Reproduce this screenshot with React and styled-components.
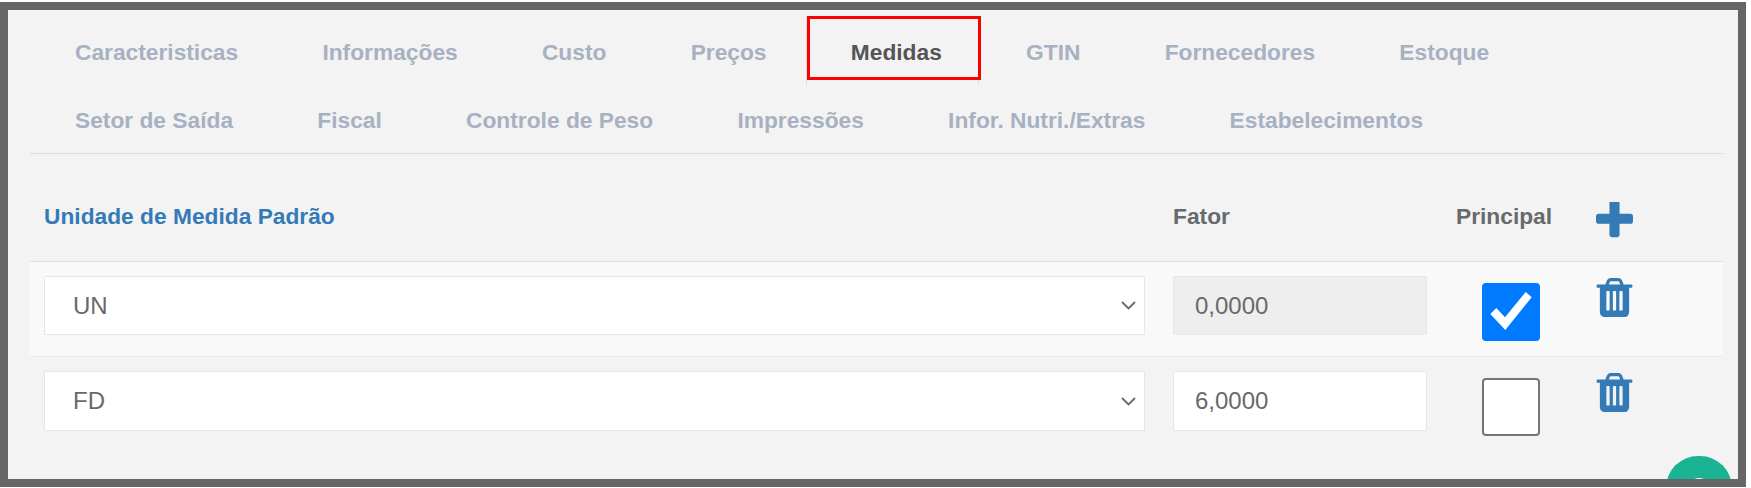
import React from "react";
import styled, { createGlobalStyle } from "styled-components";

const tabRows = [
  ["Caracteristicas", "Informações", "Custo", "Preços", "Medidas", "GTIN", "Fornecedores", "Estoque"],
  ["Setor de Saída", "Fiscal", "Controle de Peso", "Impressões", "Infor. Nutri./Extras", "Estabelecimentos"],
];

const rows = [
  { unit: "UN", factor: "0,0000", main: true },
  { unit: "FD", factor: "6,0000", main: false },
];

const GlobalStyle = createGlobalStyle`
  html, body {
    margin: 0;
    padding: 0;
    background: #fff;
  }
  body {
    font-family: "Liberation Sans", Arial, sans-serif;
  }
`;

const TrashIcon = () => (
  <TrashSvg viewBox="128 128 1536 1536">
    <path d="M704 1376v-704q0-14-9-23t-23-9h-64q-14 0-23 9t-9 23v704q0 14 9 23t23 9h64q14 0 23-9t9-23zm256 0v-704q0-14-9-23t-23-9h-64q-14 0-23 9t-9 23v704q0 14 9 23t23 9h64q14 0 23-9t9-23zm256 0v-704q0-14-9-23t-23-9h-64q-14 0-23 9t-9 23v704q0 14 9 23t23 9h64q14 0 23-9t9-23zm-544-992h448l-48-117q-7-9-17-11h-317q-10 2-17 11zm928 32v64q0 14-9 23t-23 9h-96v948q0 83-47 143.5t-113 60.5h-832q-66 0-113-58.5t-47-141.5v-952h-96q-14 0-23-9t-9-23v-64q0-14 9-23t23-9h309l70-167q15-37 54-63t79-26h320q40 0 79 26t54 63l70 167h309q14 0 23 9t9 23z" />
  </TrashSvg>
);

const PlusIcon = () => (
  <PlusSvg viewBox="192 192 1408 1408">
    <path d="M1600 736v192q0 40-28 68t-68 28h-416v416q0 40-28 68t-68 28h-192q-40 0-68-28t-28-68v-416h-416q-40 0-68-28t-28-68v-192q0-40 28-68t68-28h416v-416q0-40 28-68t68-28h192q40 0 68 28t28 68v416h416q40 0 68 28t28 68z" />
  </PlusSvg>
);

const Chevron = () => (
  <ChevronSvg viewBox="0 0 15 9">
    <path d="M1 1l6.5 6.5L14 1" />
  </ChevronSvg>
);

export default function App() {
  return (
    <>
      <GlobalStyle />
      <Panel>
        <Tabs>
          {tabRows.map((row, index) => (
            <TabRow key={index}>
              {row.map((tab) => (
                <Tab key={tab} $active={tab === "Medidas"}>
                  {tab}
                </Tab>
              ))}
            </TabRow>
          ))}
        </Tabs>

        <HeaderRow>
          <HeadTitle>Unidade de Medida Padrão</HeadTitle>
          <HeadLabel>Fator</HeadLabel>
          <HeadLabel>Principal</HeadLabel>
          <PlusIcon />
        </HeaderRow>

        {rows.map((row) => (
          <Row key={row.unit} $striped={row.main}>
            <Select $tall={!row.main}>
              {row.unit}
              <Chevron />
            </Select>
            <Factor $disabled={row.main} $tall={!row.main}>
              {row.factor}
            </Factor>
            <CheckBox $checked={row.main}>
              {row.main && (
                <svg viewBox="0 0 58 58" width="58" height="58">
                  <polygon fill="#fff" points="8.3,31 14.3,25 23,34.3 43.7,9 49.7,14.3 23.3,47" />
                </svg>
              )}
            </CheckBox>
            <TrashIcon />
          </Row>
        ))}

        <HelpButton>
          <svg viewBox="0 0 24 10" width="24" height="10">
            <circle cx="12" cy="12" r="12" fill="#fff" />
            <rect x="17.5" y="0" width="2" height="10" fill="#1ab394" />
          </svg>
        </HelpButton>
      </Panel>
    </>
  );
}

const Panel = styled.div`
  position: relative;
  box-sizing: border-box;
  width: 1746px;
  height: 485px;
  margin-top: 2px;
  padding: 15px 23px 0 30px;
  background: #f3f3f3;

  &::after {
    content: "";
    position: absolute;
    inset: 0;
    z-index: 2;
    border: 8px solid #666;
    pointer-events: none;
  }
`;

const Tabs = styled.div`
  border-bottom: 1px solid #ddd;
`;

const TabRow = styled.div`
  display: flex;
  gap: 2.25px;
`;

const Tab = styled.div`
  box-sizing: border-box;
  height: 68px;
  padding: 0 36px 0 44px;
  border: 1px solid transparent;
  border-top: 0;
  border-bottom: 0;
  font-size: 22.75px;
  font-weight: 700;
  line-height: 71px;
  color: ${({ $active }) => ($active ? "#555" : "#a7b1c2")};
  ${({ $active }) =>
    $active &&
    `
    position: relative;
    border-color: #ddd;
    &::after {
      content: "";
      position: absolute;
      left: 0;
      right: -3px;
      top: -1px;
      height: 64px;
      box-sizing: border-box;
      border: 3px solid #f00;
    }
  `}
`;

const HeaderRow = styled.div`
  display: grid;
  grid-template-columns: 1129px 283px 140px 1fr;
  align-items: start;
  height: 107px;
  padding-left: 14px;
`;

const HeadTitle = styled.div`
  margin-top: 49px;
  font-size: 22.75px;
  font-weight: 700;
  line-height: 26px;
  color: #337ab7;
`;

const HeadLabel = styled(HeadTitle)`
  color: #676a6c;
`;

const Row = styled.div`
  display: grid;
  grid-template-columns: 1129px 309px 114px 1fr;
  align-items: start;
  box-sizing: border-box;
  padding: ${({ $striped }) => ($striped ? "14px 0 15px 14px" : "14px 0 0 14px")};
  background: ${({ $striped }) => ($striped ? "#f9f9f9" : "transparent")};
  border-top: ${({ $striped }) => ($striped ? "1px solid #ddd" : "0")};
  border-bottom: ${({ $striped }) => ($striped ? "1px solid #e7eaec" : "0")};
`;

const Select = styled.div`
  display: flex;
  align-items: center;
  justify-content: space-between;
  box-sizing: border-box;
  width: 1101px;
  height: ${({ $tall }) => ($tall ? "60px" : "59px")};
  padding: 0 8px 0 28px;
  background: #fff;
  border: 1px solid #e5e6e7;
  border-radius: 1px;
  font-size: 24px;
  color: #676a6c;
`;

const ChevronSvg = styled.svg`
  width: 15px;
  height: 9px;
  fill: none;
  stroke: #676a6c;
  stroke-width: 1.8;
`;

const Factor = styled.div`
  display: flex;
  align-items: center;
  box-sizing: border-box;
  width: 254px;
  height: ${({ $tall }) => ($tall ? "60px" : "59px")};
  padding-left: 21px;
  background: ${({ $disabled }) => ($disabled ? "#eee" : "#fff")};
  border: 1px solid #e5e6e7;
  border-radius: 1px;
  font-size: 24px;
  color: #676a6c;
`;

const CheckBox = styled.div`
  box-sizing: border-box;
  width: 58px;
  height: 58px;
  margin-top: 7px;
  background: ${({ $checked }) => ($checked ? "#007bff" : "#fff")};
  border: ${({ $checked }) => ($checked ? "0" : "2px solid #767676")};
  border-radius: 4px;

  svg {
    display: block;
  }
`;

const TrashSvg = styled.svg`
  display: block;
  width: 39px;
  height: 39px;
  margin: 2px 0 0 -1px;
  fill: #337ab7;
`;

const PlusSvg = styled.svg`
  display: block;
  width: 37px;
  height: 37px;
  margin-top: 48px;
  fill: #337ab7;
`;

const HelpButton = styled.div`
  position: absolute;
  left: 1666px;
  top: 454px;
  z-index: 1;
  box-sizing: border-box;
  width: 66px;
  height: 32px;
  padding: 22px 0 0 21px;
  border-radius: 33px 33px 0 0;
  background: #1ab394;

  svg {
    display: block;
  }
`;
